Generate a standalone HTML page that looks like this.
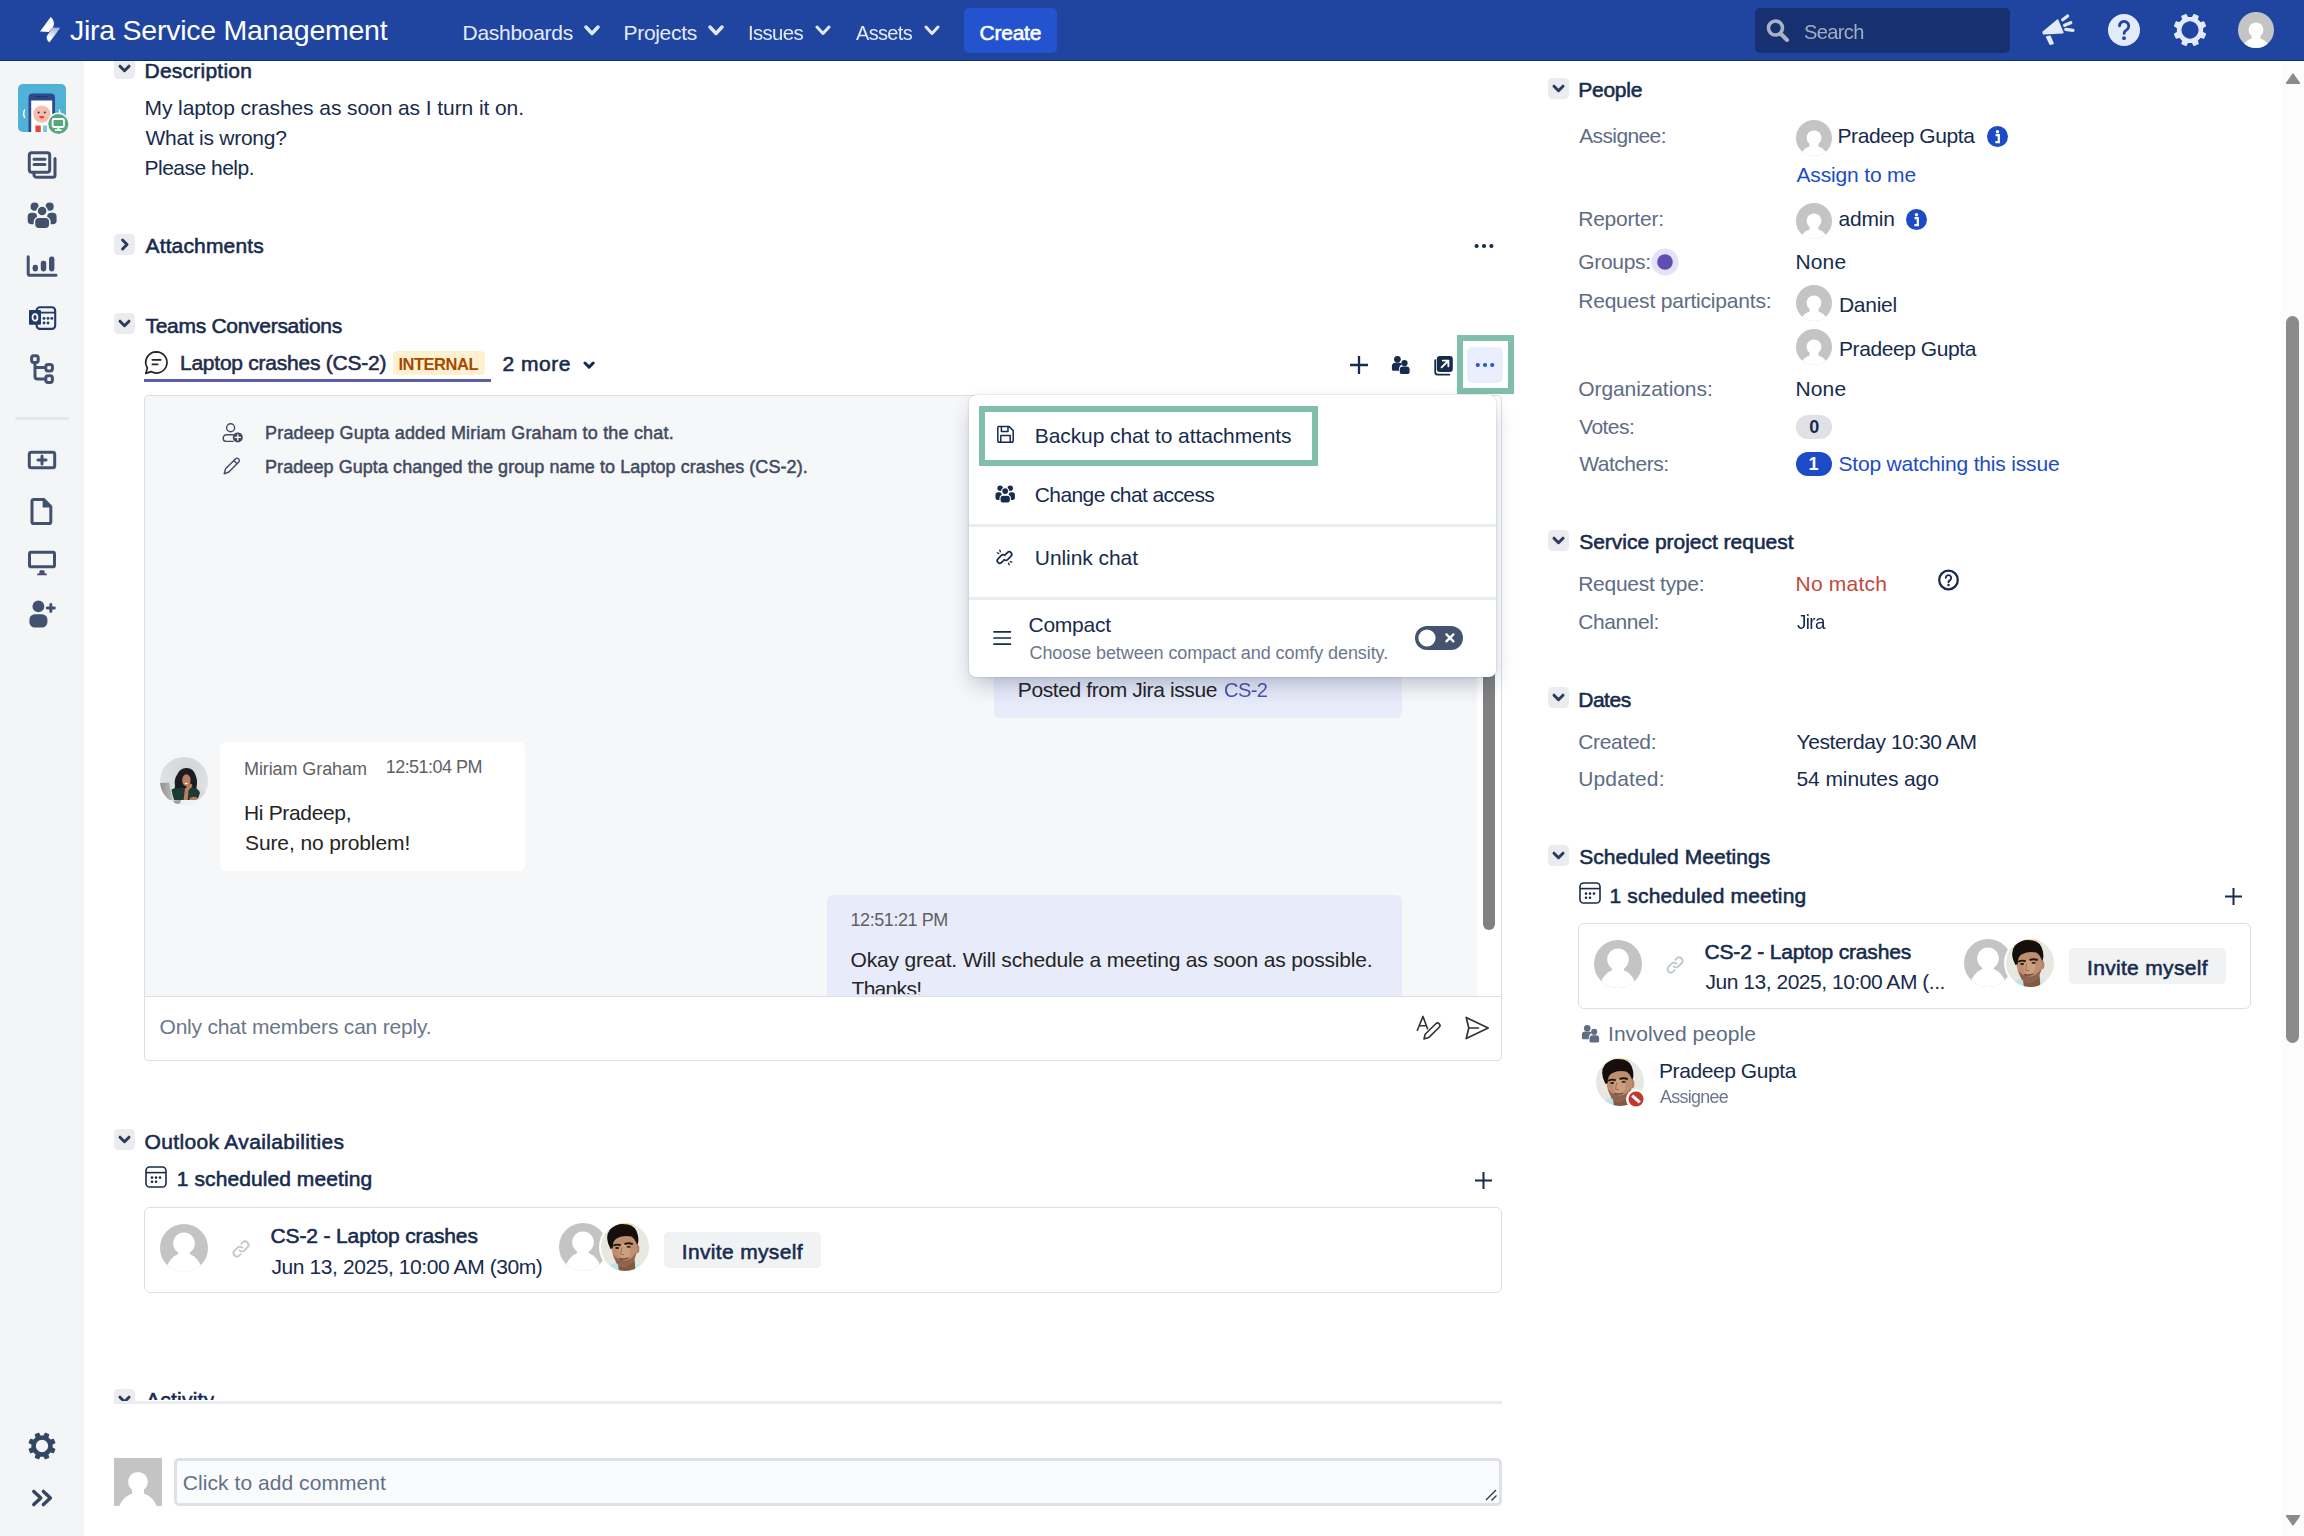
<!DOCTYPE html>
<html lang="en"><head><meta charset="utf-8"><title>[CS-2] Laptop crashes - Jira Service Management</title>
<style>
html,body{margin:0;padding:0;}
body{width:2304px;height:1536px;overflow:hidden;position:relative;background:#fff;font-family:"Liberation Sans",sans-serif;}
#pg{position:absolute;left:0;top:0;width:2304px;height:1536px;overflow:hidden;}
#pg div,#pg svg,#pg span{position:absolute;box-sizing:border-box;}
#pg span{white-space:pre;line-height:1;}
</style></head><body><div id="pg">
<div style="left:0px;top:0px;width:2304px;height:61px;background:#2045a1;border-bottom:1px solid #1a2c5c;"></div>
<svg style="left:38px;top:15px;" width="26" height="30" viewBox="0 0 26 30"><defs><linearGradient id="lg" x1="0.6" y1="0" x2="0.35" y2="1"><stop offset="0" stop-color="#9fb0da"/><stop offset="0.75" stop-color="#fff"/></linearGradient></defs><path d="M14.6 12.400 L22.300 12.800 L11.400 27.600 C8.600 25 8 22.300 9.200 20.400 Z" fill="url(#lg)"/><path d="M12.700 2 C15.600 4.200 16.900 8.400 15 12 L10.800 17 L2 16.600 Z" fill="#fff"/></svg>
<span style="left:70.00px;top:15.87px;font-size:28.5px;color:#fff;letter-spacing:-0.251px;">Jira Service Management</span>
<span style="left:462.50px;top:21.72px;font-size:21px;color:#e3ebfb;letter-spacing:-0.282px;">Dashboards</span>
<svg style="left:584px;top:24.5px;" width="16" height="11" viewBox="0 0 16 11"><path d="M2 2 L8.0 8.5 L14 2" fill="none" stroke="#e3ebfb" stroke-width="3.4" stroke-linecap="round" stroke-linejoin="round"/></svg>
<span style="left:623.50px;top:21.72px;font-size:21px;color:#e3ebfb;letter-spacing:-0.308px;">Projects</span>
<svg style="left:708px;top:24.5px;" width="16" height="11" viewBox="0 0 16 11"><path d="M2 2 L8.0 8.5 L14 2" fill="none" stroke="#e3ebfb" stroke-width="3.4" stroke-linecap="round" stroke-linejoin="round"/></svg>
<span style="left:747.50px;top:21.72px;font-size:21px;color:#e3ebfb;letter-spacing:-0.700px;transform:scaleX(0.9732);transform-origin:1.0px 50%;">Issues</span>
<svg style="left:814.5px;top:25px;" width="16" height="11" viewBox="0 0 16 11"><path d="M2 2 L8.0 8.5 L14 2" fill="none" stroke="#e3ebfb" stroke-width="3" stroke-linecap="round" stroke-linejoin="round"/></svg>
<span style="left:855.50px;top:21.72px;font-size:21px;color:#e3ebfb;letter-spacing:-0.700px;transform:scaleX(0.9522);transform-origin:-0.0px 50%;">Assets</span>
<svg style="left:923.5px;top:25px;" width="16" height="11" viewBox="0 0 16 11"><path d="M2 2 L8.0 8.5 L14 2" fill="none" stroke="#e3ebfb" stroke-width="3" stroke-linecap="round" stroke-linejoin="round"/></svg>
<div style="left:964px;top:8px;width:93px;height:45px;background:#2453d0;border-radius:5px;"></div>
<span style="left:979.50px;top:21.72px;font-size:21px;color:#fff;-webkit-text-stroke:0.57px #fff;letter-spacing:-0.230px;">Create</span>
<div style="left:1755px;top:8px;width:255px;height:45px;background:#17306f;border-radius:5px;"></div>
<svg style="left:1765px;top:18px;" width="26" height="26" viewBox="0 0 26 26"><circle cx="10.5" cy="10" r="7" fill="none" stroke="#a9b2c4" stroke-width="3.6"/><path d="M15.5 15.5 L22 22" stroke="#a9b2c4" stroke-width="4" stroke-linecap="round"/></svg>
<span style="left:1804.00px;top:21.22px;font-size:21px;color:#a3adc2;letter-spacing:-0.700px;transform:scaleX(0.9574);transform-origin:-0.0px 50%;">Search</span>
<svg style="left:2040px;top:13px;" width="36" height="34" viewBox="0 0 36 34"><g fill="#e3ebfb" stroke="#e3ebfb" stroke-width="1.600" stroke-linejoin="round"><path d="M3.200 19 L17.600 7 L22.800 19.600 L3.600 20.800 Z" /><path d="M6.600 24 L10 23.200 L13 30.400 L10.200 31.200 Z"/></g><g stroke="#e3ebfb" stroke-width="3.200" stroke-linecap="round"><path d="M22.700 6.700 L27.600 3"/><path d="M24.600 12.300 L30.800 9.700"/><path d="M25.800 16.400 L33 17.400"/></g></svg>
<svg style="left:2106px;top:12px;" width="36" height="36" viewBox="0 0 36 36"><circle cx="18" cy="18" r="16" fill="#e3ebfb"/><path d="M13.5 14 a4.6 4.6 0 1 1 7 3.9 c-1.6 1-2.4 1.8-2.4 3.6" fill="none" stroke="#2045a1" stroke-width="2.700" stroke-linecap="round"/><circle cx="18" cy="26.200" r="1.900" fill="#2045a1"/></svg>
<svg style="left:2172px;top:11.7px;" width="36" height="36" viewBox="0 0 36 36"><path d="M30.43 15.40 L33.84 15.76 L33.84 20.24 L30.43 20.60 L28.63 24.95 L30.78 27.62 L27.62 30.78 L24.95 28.63 L20.60 30.43 L20.24 33.84 L15.76 33.84 L15.40 30.43 L11.05 28.63 L8.38 30.78 L5.22 27.62 L7.37 24.95 L5.57 20.60 L2.16 20.24 L2.16 15.76 L5.57 15.40 L7.37 11.05 L5.22 8.38 L8.38 5.22 L11.05 7.37 L15.40 5.57 L15.76 2.16 L20.24 2.16 L20.60 5.57 L24.95 7.37 L27.62 5.22 L30.78 8.38 L28.63 11.05 Z M27.2 18 A9.2 9.2 0 1 0 8.8 18 A9.2 9.2 0 1 0 27.2 18 Z" fill="#e3ebfb" fill-rule="evenodd" stroke="#e3ebfb" stroke-width="1.2" stroke-linejoin="round" transform="rotate(22.5 18 18)"/></svg>
<svg style="left:2238px;top:12px;" width="36" height="36" viewBox="0 0 36 36"><clipPath id="ac19"><circle cx="18" cy="18" r="18"/></clipPath><circle cx="18" cy="18" r="18" fill="#c4c4c4"/><g clip-path="url(#ac19)" fill="#fff"><circle cx="18" cy="17.82" r="7.38"/><path d="M13.50 17.82 V27.60 L9.90 29.60 H26.10 L22.50 27.60 V17.82Z"/><ellipse cx="18" cy="40.50" rx="14.76" ry="14.40"/></g></svg>
<div style="left:0px;top:61px;width:84px;height:1475px;background:#f4f5f7;"></div>
<svg style="left:18px;top:84px;" width="52" height="52" viewBox="0 0 52 52"><clipPath id="pa"><rect width="48" height="48" rx="5"/></clipPath><rect width="48" height="48" rx="5" fill="#4fb2d6"/><g clip-path="url(#pa)"><rect x="10.5" y="9.5" width="26.5" height="42" rx="4" fill="#2c4a8c"/><rect x="13.2" y="16.5" width="21" height="34" fill="#fff"/><rect x="17.5" y="12" width="12" height="1.6" rx="0.8" fill="#1f3a73"/><circle cx="23.8" cy="30.2" r="8.6" fill="#f6bdb2"/><circle cx="20.6" cy="28.6" r="1" fill="#333"/><circle cx="26.8" cy="28.6" r="1" fill="#333"/><path d="M21.3 32 h5 a2.5 2.5 0 0 1 -5 0z" fill="#e5493a"/><rect x="17.4" y="41.5" width="5.4" height="6.5" fill="#e5493a"/><rect x="25" y="41.5" width="4" height="6.5" fill="#7cc7d8"/><path d="M6.8 25.5 q-2.2 4.2 0 8.4" stroke="#fff" stroke-width="1.4" fill="none"/><path d="M41 25.5 q2.2 4.2 0 8.4" stroke="#fff" stroke-width="1.4" fill="none"/></g><circle cx="40.3" cy="40" r="11.4" fill="#f4f5f7"/><circle cx="40.3" cy="40" r="10" fill="#56a77a"/><rect x="34.6" y="35" width="11.4" height="8" rx="1.4" fill="none" stroke="#fff" stroke-width="1.8"/><path d="M40.3 43 v3 M37 46.2 h6.6" stroke="#fff" stroke-width="1.8"/></svg>
<svg style="left:26px;top:149px;" width="32" height="32" viewBox="0 0 32 32"><path d="M8 9.5 V26 a2.2 2.2 0 0 0 2.2 2.2 H27 a2 2 0 0 0 2-2 V9.5" fill="none" stroke="#42526e" stroke-width="3" stroke-linejoin="round" stroke-linecap="round"/><rect x="3.3" y="3.8" width="20.4" height="19.4" rx="2.4" fill="#f4f5f7" stroke="#42526e" stroke-width="3"/><path d="M8 10.2 h11 M8 15.6 h11" stroke="#42526e" stroke-width="3" stroke-linecap="round"/></svg>
<svg style="left:26.7px;top:202px;" width="30.3" height="27.27" viewBox="0 0 30 27.600"><g fill="#42526e"><circle cx="7.400" cy="4.700" r="4.100"/><circle cx="22.600" cy="4.700" r="4.100"/><rect x="0.400" y="10.800" width="9.400" height="11.800" rx="3.800"/><rect x="20.200" y="10.800" width="9.400" height="11.800" rx="3.800"/><g stroke="#f4f5f7" stroke-width="1.600"><rect x="7.200" y="15.400" width="15.600" height="11.800" rx="4.600"/><circle cx="15" cy="9.200" r="5.100"/></g></g></svg>
<svg style="left:25px;top:254px;" width="34" height="26" viewBox="0 0 34 26"><path d="M3.2 2.8 V19.8 a1.5 1.5 0 0 0 1.5 1.5 H31" fill="none" stroke="#42526e" stroke-width="3" stroke-linecap="round"/><rect x="7.6" y="10.8" width="5.4" height="6.6" rx="2.4" fill="#42526e"/><rect x="15.8" y="6.8" width="5.4" height="10.6" rx="2.4" fill="#42526e"/><rect x="24" y="2.6" width="5.4" height="14.8" rx="2.4" fill="#42526e"/></svg>
<svg style="left:26px;top:304px;" width="32" height="28" viewBox="0 0 32 28"><rect x="10.600" y="3.300" width="18.600" height="21.600" rx="3.400" fill="#f4f5f7" stroke="#213a69" stroke-width="2.100"/><path d="M10.600 8.600 h18.600" stroke="#213a69" stroke-width="1.800"/><g fill="#213a69"><circle cx="18" cy="14.400" r="1.450"/><circle cx="22" cy="14.400" r="1.450"/><circle cx="25.800" cy="14.400" r="1.450"/><circle cx="18" cy="19" r="1.450"/><circle cx="22" cy="19" r="1.450"/></g><rect x="3" y="6" width="12" height="14.800" rx="0.800" fill="#213a69"/><ellipse cx="9" cy="13.400" rx="2.500" ry="3.300" fill="none" stroke="#fff" stroke-width="1.700"/></svg>
<svg style="left:29px;top:353px;" width="26" height="32" viewBox="0 0 26 32"><g fill="none" stroke="#42526e" stroke-width="3"><rect x="2.600" y="2.800" width="6.600" height="6.600" rx="2.200"/><rect x="16.800" y="11.400" width="6.600" height="6.600" rx="2.200"/><rect x="16.800" y="22.800" width="6.600" height="6.600" rx="2.200"/><path d="M6 9.600 V23.600 a2.400 2.400 0 0 0 2.400 2.400 H16.600 M6 14.600 H16.600"/></g></svg>
<div style="left:15px;top:416.5px;width:54px;height:3px;background:#e4e6ea;border-radius:1.5px;"></div>
<svg style="left:26px;top:449px;" width="32" height="22" viewBox="0 0 32 22"><rect x="3.300" y="3.300" width="25.400" height="15.400" rx="2" fill="none" stroke="#42526e" stroke-width="3"/><path d="M16 7 v8 M12 11 h8" stroke="#42526e" stroke-width="3" stroke-linecap="round"/></svg>
<svg style="left:29px;top:495.5px;" width="26" height="31" viewBox="0 0 26 31"><path d="M4.600 3.400 H14.600 L21.800 10.600 V26 a1.600 1.600 0 0 1 -1.600 1.600 H4.600 a1.600 1.600 0 0 1 -1.600 -1.600 V5 a1.600 1.600 0 0 1 1.600 -1.600z" fill="none" stroke="#42526e" stroke-width="3" stroke-linejoin="round"/><path d="M13.600 3.400 L21.800 11.600 H13.600Z" fill="#42526e"/></svg>
<svg style="left:26px;top:549px;" width="32" height="29" viewBox="0 0 32 29"><rect x="3.500" y="3.200" width="25" height="14.600" rx="1.600" fill="none" stroke="#42526e" stroke-width="3"/><path d="M13.800 21.200 h4.400 l0.700 3.200 h-5.800z M11.200 24.400 h9.600 v1.800 h-9.600z" fill="#42526e"/></svg>
<svg style="left:27px;top:598px;" width="30" height="31" viewBox="0 0 30 31"><g fill="#42526e"><circle cx="11.400" cy="8.400" r="5.900"/><rect x="2.400" y="16.200" width="18" height="13.400" rx="5.400"/></g><path d="M23.800 6.400 v7.200 M20.200 10 h7.200" stroke="#42526e" stroke-width="2.900" stroke-linecap="round"/></svg>
<svg style="left:24px;top:1428px;" width="36" height="36" viewBox="0 0 36 36"><path d="M27.98 15.91 L31.07 16.16 L31.07 19.84 L27.98 20.09 L26.54 23.58 L28.55 25.94 L25.94 28.55 L23.58 26.54 L20.09 27.98 L19.84 31.07 L16.16 31.07 L15.91 27.98 L12.42 26.54 L10.06 28.55 L7.45 25.94 L9.46 23.58 L8.02 20.09 L4.93 19.84 L4.93 16.16 L8.02 15.91 L9.46 12.42 L7.45 10.06 L10.06 7.45 L12.42 9.46 L15.91 8.02 L16.16 4.93 L19.84 4.93 L20.09 8.02 L23.58 9.46 L25.94 7.45 L28.55 10.06 L26.54 12.42 Z M24.8 18 A6.8 6.8 0 1 0 11.2 18 A6.8 6.8 0 1 0 24.8 18 Z" fill="#344563" fill-rule="evenodd" stroke="#344563" stroke-width="1.2" stroke-linejoin="round" transform="rotate(22.5 18 18)"/></svg>
<svg style="left:30px;top:1487px;" width="24" height="22" viewBox="0 0 24 22"><path d="M3.800 4.400 L10.800 11 L3.800 17.600 M13.400 4.400 L20.400 11 L13.400 17.600" fill="none" stroke="#344563" stroke-width="3.400" stroke-linecap="round" stroke-linejoin="round"/></svg>
<svg style="left:114px;top:61px;" width="21" height="18" viewBox="0 0 21 18"><rect y="-3" width="21" height="21" rx="4.500" fill="#ebecf0"/><path d="M6 5.200 L10.500 9.700 L15 5.200" fill="none" stroke="#2c3b5a" stroke-width="3" stroke-linecap="round" stroke-linejoin="round"/></svg>
<span style="left:144.50px;top:60.22px;font-size:21px;color:#172b4d;-webkit-text-stroke:0.57px #172b4d;letter-spacing:0.234px;clip-path:inset(3px 0 0 0);">Description</span>
<span style="left:144.50px;top:97.22px;font-size:21px;color:#172b4d;letter-spacing:-0.081px;">My laptop crashes as soon as I turn it on.</span>
<span style="left:145.50px;top:127.22px;font-size:21px;color:#172b4d;letter-spacing:-0.257px;">What is wrong?</span>
<span style="left:144.50px;top:157.22px;font-size:21px;color:#172b4d;letter-spacing:-0.504px;">Please help.</span>
<svg style="left:114px;top:234px;" width="21" height="21" viewBox="0 0 21 21"><rect width="21" height="21" rx="4.500" fill="#ebecf0"/><path d="M8.600 6 L13 10.500 L8.600 15" fill="none" stroke="#2c3b5a" stroke-width="3" stroke-linecap="round" stroke-linejoin="round"/></svg>
<span style="left:145.50px;top:235.22px;font-size:21px;color:#172b4d;-webkit-text-stroke:0.57px #172b4d;letter-spacing:0.148px;">Attachments</span>
<svg style="left:1471.5px;top:241.5px;" width="24" height="8" viewBox="0 0 24 8"><circle cx="4.6" cy="4" r="2.1" fill="#172b4d"/><circle cx="12.0" cy="4" r="2.1" fill="#172b4d"/><circle cx="19.4" cy="4" r="2.1" fill="#172b4d"/></svg>
<svg style="left:114px;top:313px;" width="21" height="21" viewBox="0 0 21 21"><rect width="21" height="21" rx="4.500" fill="#ebecf0"/><path d="M6 8.200 L10.500 12.700 L15 8.200" fill="none" stroke="#2c3b5a" stroke-width="3" stroke-linecap="round" stroke-linejoin="round"/></svg>
<span style="left:145.50px;top:315.22px;font-size:21px;color:#172b4d;-webkit-text-stroke:0.57px #172b4d;letter-spacing:-0.290px;">Teams Conversations</span>
<svg style="left:143px;top:349px;" width="27" height="28" viewBox="0 0 27 28"><path d="M13.400 2.800 a10.600 10.600 0 1 1 -5.300 19.800 L2.800 24.400 L4.400 19 A10.600 10.600 0 0 1 13.400 2.800z" fill="none" stroke="#242424" stroke-width="1.700" stroke-linejoin="round"/><path d="M9.400 10.800 h8.400 M9.400 15.400 h5.200" stroke="#242424" stroke-width="1.700" stroke-linecap="round"/></svg>
<span style="left:180.00px;top:351.92px;font-size:21px;color:#1f2d4d;-webkit-text-stroke:0.57px #1f2d4d;letter-spacing:-0.243px;">Laptop crashes (CS-2)</span>
<div style="left:393px;top:351px;width:92px;height:24px;background:#fdf1d0;border-radius:4.5px;"></div>
<span style="left:398.50px;top:356.03px;font-size:16.5px;color:#a54800;font-weight:700;letter-spacing:-0.490px;">INTERNAL</span>
<div style="left:144px;top:379.3px;width:347px;height:3px;background:#5b5fa9;"></div>
<span style="left:502.50px;top:353.22px;font-size:21px;color:#172b4d;-webkit-text-stroke:0.57px #172b4d;letter-spacing:0.504px;">2 more</span>
<svg style="left:583.3px;top:361px;" width="12.2" height="8.6" viewBox="0 0 12.2 8.6"><path d="M2 2 L6.1 6.1 L10.2 2" fill="none" stroke="#172b4d" stroke-width="3" stroke-linecap="round" stroke-linejoin="round"/></svg>
<svg style="left:1349.0px;top:355.0px;" width="20" height="20" viewBox="0 0 20 20"><path d="M10.0 1 v18 M1 10.0 h18" stroke="#172b4d" stroke-width="2.3"/></svg>
<svg style="left:1391.3px;top:355.2px;" width="19.5" height="19.5" viewBox="0 0 19.200 19.800"><g fill="#172b4d"><circle cx="6.200" cy="4.400" r="3.400"/><path d="M0.600 14.400 v-3 a3.600 3.600 0 0 1 3.600 -3.600 h4 a3.600 3.600 0 0 1 3 1.600 a5.600 5.600 0 0 0 -3.400 5 v1.600 h-5.600 a1.600 1.600 0 0 1 -1.600 -1.600z"/><circle cx="13.400" cy="8.200" r="3.200"/><path d="M8.600 17.600 v-2.800 a3.200 3.200 0 0 1 3.200 -3.200 h3.600 a3.200 3.200 0 0 1 3.200 3.200 v2.800 a1.800 1.800 0 0 1 -1.800 1.800 h-6.400 a1.800 1.800 0 0 1 -1.800 -1.800z"/></g></svg>
<svg style="left:1431px;top:353.5px;" width="24" height="24" viewBox="0 0 24 24"><path d="M4.200 6.200 V18 a2.600 2.600 0 0 0 2.600 2.600 H18.400" fill="none" stroke="#172b4d" stroke-width="1.800" stroke-linecap="round"/><rect x="5.800" y="2" width="16" height="16" rx="3" fill="#172b4d"/><path d="M10.600 13.400 L17 7 M11.800 6.600 H17.400 V12.200" fill="none" stroke="#fff" stroke-width="1.900" stroke-linecap="round" stroke-linejoin="round"/></svg>
<div style="left:1457.2px;top:335.4px;width:56.4px;height:58.4px;border:6px solid #80bfa9;"></div>
<div style="left:1467px;top:347px;width:36px;height:36px;background:#e9effd;border-radius:5px;"></div>
<svg style="left:1472.7px;top:360.5px;" width="24" height="8" viewBox="0 0 24 8"><circle cx="4.8" cy="4" r="2.1" fill="#2456d6"/><circle cx="12.0" cy="4" r="2.1" fill="#2456d6"/><circle cx="19.2" cy="4" r="2.1" fill="#2456d6"/></svg>
<div style="left:144px;top:394.5px;width:1358px;height:666.5px;background:#fff;border-radius:4px;border:1px solid #dcdfe6;"></div>
<div style="left:145px;top:395.5px;width:1332px;height:600.5px;background:#f6f7f9;border-radius:4px 0 0 0;"></div>
<div style="left:145px;top:996px;width:1356px;height:1px;background:#dcdfe6;"></div>
<svg style="left:221px;top:421.5px;" width="24" height="22" viewBox="0 0 24 22"><circle cx="9.600" cy="5.800" r="4" fill="none" stroke="#424a60" stroke-width="1.400"/><path d="M12 19.400 H5 a2.800 2.800 0 0 1 -2.800 -2.800 v-0.600 a3.200 3.200 0 0 1 3.200 -3.200 h6.800" fill="none" stroke="#424a60" stroke-width="1.400" stroke-linecap="round"/><circle cx="16.800" cy="15.400" r="5" fill="#424a60"/><path d="M16.800 12.800 v5.200 M14.200 15.400 h5.200" stroke="#fff" stroke-width="1.300" stroke-linecap="round"/></svg>
<span style="left:265.00px;top:423.76px;font-size:18px;color:#424a60;-webkit-text-stroke:0.49px #424a60;letter-spacing:0.188px;">Pradeep Gupta added Miriam Graham to the chat.</span>
<svg style="left:221px;top:456px;" width="22" height="21" viewBox="0 0 22 21"><path d="M3.200 17.800 L4.600 12.800 L14.600 2.800 a2 2 0 0 1 2.800 0 l0.400 0.400 a2 2 0 0 1 0 2.800 L7.800 16 Z M12.800 4.600 L16 7.800" fill="none" stroke="#424a60" stroke-width="1.400" stroke-linejoin="round" stroke-linecap="round"/></svg>
<span style="left:265.00px;top:457.76px;font-size:18px;color:#424a60;-webkit-text-stroke:0.49px #424a60;letter-spacing:0.072px;">Pradeep Gupta changed the group name to Laptop crashes (CS-2).</span>
<div style="left:994px;top:560px;width:408px;height:157.5px;background:#e8ebfa;border-radius:6px;"></div>
<span style="left:1017.80px;top:678.62px;font-size:21px;color:#242424;letter-spacing:-0.389px;">Posted from Jira issue </span>
<span style="left:1223.50px;top:678.62px;font-size:21px;color:#4f52b2;letter-spacing:-0.700px;transform:scaleX(0.9577);transform-origin:1.0px 50%;">CS-2</span>
<svg style="left:160px;top:757px;" width="48" height="48" viewBox="0 0 48 48"><defs><clipPath id="pm"><circle cx="24" cy="24" r="24"/></clipPath><filter id="pmb" x="-10%" y="-10%" width="120%" height="120%"><feGaussianBlur stdDeviation="0.55"/></filter><radialGradient id="pmg" cx="0.55" cy="0.25" r="0.8"><stop offset="0" stop-color="#d2d4d7"/><stop offset="1" stop-color="#e6e7e9"/></radialGradient><linearGradient id="pml" x1="0" y1="0" x2="1" y2="0"><stop offset="0" stop-color="#8c8c8c"/><stop offset="1" stop-color="#bcbcbc"/></linearGradient></defs><g clip-path="url(#pm)"><rect width="48" height="48" fill="url(#pmg)"/><g filter="url(#pmb)"><path d="M37 31.500 Q43 30 46.500 36 L46.500 44 L37 44Z" fill="#dadada"/><path d="M-1 26 L9.200 25.400 L12.600 43.500 L-1 47Z" fill="url(#pml)"/><path d="M26 11 Q33 10.500 35.500 18 Q38 24 36.500 30 Q37.500 36 33 39.500 L18 40.500 Q13 36 15 29 Q13.800 22 17.500 17 Q20 11.500 26 11Z" fill="#1a1e20"/><path d="M11.500 32.500 Q14 30.500 18 31 L34 30.500 Q39 32 40 36 L38 41.500 L30 43 L14 43 L12.500 38Z" fill="#1f3a35"/><ellipse cx="26.400" cy="23.200" rx="4.200" ry="6" fill="#b9805f"/><ellipse cx="26.200" cy="26.500" rx="1.600" ry="0.700" fill="#fff"/><path d="M30.500 26.500 Q33 27 32 30 L28.600 33 L27.600 43.500 L23.500 43.500 L25 32 Q27.500 28 30.500 26.500Z" fill="#b9805f"/><rect x="24.400" y="34.800" width="3.600" height="1" fill="#a8792e"/><path d="M30 41 Q34 38.500 37.500 41 L36 43.600 L29 43.600Z" fill="#b07857"/><rect x="-1" y="43" width="50" height="6" fill="#f2f2f2"/><path d="M13 43.600 L21 43 L20 46.500 L15 47Z" fill="#9a9da3"/></g></g></svg>
<div style="left:220px;top:742px;width:305px;height:128.7px;background:#fff;border-radius:6px;"></div>
<span style="left:244.00px;top:760.26px;font-size:18px;color:#616161;letter-spacing:-0.093px;">Miriam Graham</span>
<span style="left:385.70px;top:757.76px;font-size:18px;color:#616161;letter-spacing:-0.537px;">12:51:04 PM</span>
<span style="left:244.00px;top:802.22px;font-size:21px;color:#242424;letter-spacing:-0.336px;">Hi Pradeep,</span>
<span style="left:245.00px;top:832.22px;font-size:21px;color:#242424;letter-spacing:-0.106px;">Sure, no problem!</span>
<div style="left:826.6px;top:895px;width:575.4px;height:101px;background:#e8ebfa;border-radius:6px 6px 0 0;"></div>
<span style="left:850.50px;top:911.06px;font-size:18px;color:#616161;letter-spacing:-0.427px;">12:51:21 PM</span>
<span style="left:850.50px;top:948.72px;font-size:21px;color:#242424;letter-spacing:-0.186px;">Okay great. Will schedule a meeting as soon as possible.</span>
<span style="left:851.50px;top:977.72px;font-size:21px;color:#242424;letter-spacing:-0.694px;clip-path:inset(0 0 4.400px 0);">Thanks!</span>
<div style="left:1483px;top:560px;width:12px;height:370px;background:#808080;border-radius:6px;"></div>
<span style="left:159.50px;top:1016.22px;font-size:21px;color:#6b778c;letter-spacing:-0.198px;">Only chat members can reply.</span>
<svg style="left:1415px;top:1014px;" width="28" height="28" viewBox="0 0 28 28"><path d="M2.400 16.300 L8 2.400 L12.500 14.700 M4.600 11.800 H11.100" fill="none" stroke="#333" stroke-width="1.600" stroke-linejoin="round" stroke-linecap="round"/><path d="M9 25 L10.200 20.300 L20.800 9.800 a2.400 2.400 0 0 1 3.400 3.400 L13.600 23.600 Z" fill="none" stroke="#333" stroke-width="1.600" stroke-linejoin="round"/></svg>
<svg style="left:1462px;top:1014px;" width="30" height="28" viewBox="0 0 30 28"><path d="M4.200 3.400 L26.200 14 L4.200 24.600 L6.800 14 Z M6.800 14 H16.400" fill="none" stroke="#333" stroke-width="1.700" stroke-linejoin="round" stroke-linecap="round"/></svg>
<div style="left:969px;top:394.5px;width:527px;height:282px;background:#fff;border-radius:7px;box-shadow:0 0 2px rgba(9,30,66,.25),0 10px 22px -4px rgba(9,30,66,.28);"></div>
<div style="left:979px;top:406px;width:338.5px;height:60px;border:6px solid #80bfa9;"></div>
<svg style="left:994.5px;top:424px;" width="21" height="21" viewBox="0 0 21 21"><path d="M3.400 2.600 H14.200 L18.200 6.600 V16.400 a1.800 1.800 0 0 1 -1.800 1.800 H4.600 a1.800 1.800 0 0 1 -1.800 -1.800 V3.200 z" fill="none" stroke="#172b4d" stroke-width="1.500" stroke-linejoin="round"/><path d="M6.400 2.800 V7.400 H13 V2.800 M5.800 18 V11.600 H15.200 V18" fill="none" stroke="#172b4d" stroke-width="1.500" stroke-linejoin="round"/></svg>
<span style="left:1034.80px;top:424.82px;font-size:21px;color:#172b4d;letter-spacing:-0.098px;">Backup chat to attachments</span>
<svg style="left:994.8px;top:485px;" width="20.4" height="18.36" viewBox="0 0 30 27.600"><g fill="#172b4d"><circle cx="7.400" cy="4.700" r="4.100"/><circle cx="22.600" cy="4.700" r="4.100"/><rect x="0.400" y="10.800" width="9.400" height="11.800" rx="3.800"/><rect x="20.200" y="10.800" width="9.400" height="11.800" rx="3.800"/><g stroke="#fff" stroke-width="1.600"><rect x="7.200" y="15.400" width="15.600" height="11.800" rx="4.600"/><circle cx="15" cy="9.200" r="5.100"/></g></g></svg>
<span style="left:1034.80px;top:484.22px;font-size:21px;color:#172b4d;letter-spacing:-0.605px;">Change chat access</span>
<div style="left:969px;top:524px;width:527px;height:3px;background:#ebecf0;"></div>
<svg style="left:994px;top:547px;" width="21" height="21" viewBox="0 0 21 21"><g fill="none" stroke="#172b4d" stroke-width="1.700" stroke-linecap="round"><path d="M9.200 13.800 L7.600 15.400 a2.500 2.500 0 0 1 -3.600 -3.600 L7.400 8.400 a2.500 2.500 0 0 1 3.600 0"/><path d="M11.800 7.200 L13.400 5.600 a2.500 2.500 0 0 1 3.600 3.600 L13.600 12.600 a2.500 2.500 0 0 1 -3.600 0"/><path d="M3.200 5.800 L4.800 6.400 M5.800 3.200 L6.400 4.800 M17.800 15.200 L16.200 14.600 M15.200 17.800 L14.600 16.200" stroke-width="1.300"/></g></svg>
<span style="left:1034.80px;top:547.22px;font-size:21px;color:#172b4d;letter-spacing:-0.065px;">Unlink chat</span>
<div style="left:969px;top:596.5px;width:527px;height:3px;background:#ebecf0;"></div>
<svg style="left:991px;top:629px;" width="22" height="18" viewBox="0 0 22 18"><path d="M3 2.800 H19.400 M3 9 H19.400 M3 15.200 H19.400" stroke="#172b4d" stroke-width="1.700" stroke-linecap="round"/></svg>
<span style="left:1028.50px;top:613.62px;font-size:21px;color:#172b4d;letter-spacing:-0.249px;">Compact</span>
<span style="left:1029.50px;top:644.36px;font-size:18px;color:#6b778c;letter-spacing:-0.079px;">Choose between compact and comfy density.</span>
<div style="left:1415px;top:625.7px;width:48px;height:24px;background:#44546f;border-radius:12px;"></div>
<svg style="left:1417px;top:627.7px;" width="44" height="20" viewBox="0 0 44 20"><circle cx="10" cy="10" r="8.600" fill="#fff"/><path d="M29.400 6.400 L36.400 13.400 M36.400 6.400 L29.400 13.400" stroke="#fff" stroke-width="2.300" stroke-linecap="round"/></svg>
<svg style="left:114px;top:1129px;" width="21" height="21" viewBox="0 0 21 21"><rect width="21" height="21" rx="4.500" fill="#ebecf0"/><path d="M6 8.200 L10.500 12.700 L15 8.200" fill="none" stroke="#2c3b5a" stroke-width="3" stroke-linecap="round" stroke-linejoin="round"/></svg>
<span style="left:144.50px;top:1131.22px;font-size:21px;color:#172b4d;-webkit-text-stroke:0.57px #172b4d;letter-spacing:0.349px;">Outlook Availabilities</span>
<svg style="left:144.8px;top:1165.8px;" width="22" height="22" viewBox="0 0 22 22"><rect x="1" y="1" width="20" height="20" rx="3.600" fill="none" stroke="#172b4d" stroke-width="1.600"/><path d="M1 6.600 H21" stroke="#172b4d" stroke-width="1.600"/><g fill="#172b4d"><circle cx="7" cy="11.600" r="1.300"/><circle cx="11" cy="11.600" r="1.300"/><circle cx="15" cy="11.600" r="1.300"/><circle cx="7" cy="15.800" r="1.300"/><circle cx="11" cy="15.800" r="1.300"/></g></svg>
<span style="left:176.80px;top:1167.92px;font-size:21px;color:#172b4d;-webkit-text-stroke:0.57px #172b4d;letter-spacing:0.082px;">1 scheduled meeting</span>
<svg style="left:1474.0px;top:1170.5px;" width="19" height="19" viewBox="0 0 19 19"><path d="M9.5 1 v17 M1 9.5 h17" stroke="#172b4d" stroke-width="2"/></svg>
<div style="left:144px;top:1207px;width:1358px;height:86px;background:#fff;border-radius:6px;border:1px solid #dcdfe6;"></div>
<svg style="left:160px;top:1223.5px;" width="48" height="48" viewBox="0 0 48 48"><clipPath id="ac102"><circle cx="24" cy="24" r="24"/></clipPath><circle cx="24" cy="24" r="24" fill="#c4c4c4"/><g clip-path="url(#ac102)" fill="#fff"><circle cx="24" cy="19.30" r="10.85"/><path d="M18.00 19.30 V30.80 L13.20 32.80 H34.80 L30.00 30.80 V19.30Z"/><ellipse cx="24" cy="48.41" rx="18.00" ry="19.10"/></g></svg>
<svg style="left:231px;top:1239px;" width="20" height="20" viewBox="0 0 20 20"><g fill="none" stroke="#c1c7d0" stroke-width="1.900" stroke-linecap="round"><path d="M8.600 11.400 a3.400 3.400 0 0 0 4.800 0 l3.200 -3.200 a3.400 3.400 0 0 0 -4.800 -4.800 l-1.400 1.400"/><path d="M11.400 8.600 a3.400 3.400 0 0 0 -4.800 0 l-3.200 3.200 a3.400 3.400 0 0 0 4.800 4.800 l1.400 -1.400"/></g></svg>
<span style="left:270.50px;top:1224.92px;font-size:21px;color:#172b4d;-webkit-text-stroke:0.57px #172b4d;letter-spacing:-0.135px;">CS-2 - Laptop crashes</span>
<span style="left:271.50px;top:1255.52px;font-size:21px;color:#172b4d;letter-spacing:-0.414px;">Jun 13, 2025, 10:00 AM (30m)</span>
<svg style="left:558.8px;top:1223px;" width="48" height="48" viewBox="0 0 48 48"><clipPath id="ac106"><circle cx="24" cy="24" r="24"/></clipPath><circle cx="24" cy="24" r="24" fill="#c4c4c4"/><g clip-path="url(#ac106)" fill="#fff"><circle cx="24" cy="19.30" r="10.85"/><path d="M18.00 19.30 V30.80 L13.20 32.80 H34.80 L30.00 30.80 V19.30Z"/><ellipse cx="24" cy="48.41" rx="18.00" ry="19.10"/></g></svg>
<svg style="left:599px;top:1221px;" width="52" height="52" viewBox="0 0 52 52"><defs><clipPath id="pp107"><circle cx="24" cy="24" r="24"/></clipPath><filter id="pb107" x="-10%" y="-10%" width="120%" height="120%"><feGaussianBlur stdDeviation="0.500"/></filter></defs><circle cx="26" cy="26" r="26" fill="#fff"/><g transform="translate(2 2)"><g clip-path="url(#pp107)"><rect width="48" height="48" fill="#e8e8e3"/><g filter="url(#pb107)"><rect x="17" y="-2" width="17" height="4.500" fill="#f3d98f"/><path d="M5 49 L9 42 L17.500 39 L21 49Z" fill="#bfe3ea"/><path d="M29 49 L32.500 37.500 L40.500 42 L45 49Z" fill="#cfeaf0"/><path d="M16.500 37 L33.500 35 L34.500 49 L18 49Z" fill="#85593f"/><ellipse cx="36.200" cy="26" rx="2.200" ry="4.200" fill="#b58466"/><path d="M10 22 Q9.500 14 17 12.500 Q28 10 35 17 Q37 24 35.500 31 Q33 40 25 43.200 Q19 44.200 15.500 40 Q11 33 10 22Z" fill="#be8e6e"/><ellipse cx="23.500" cy="28" rx="6" ry="7.500" fill="#cd9f80"/><path d="M11.800 31 Q17 37.500 24 37.500 Q31 37 35.300 29.500 Q33.500 40 25 43.200 Q19 44.200 15.500 40Z" fill="#8d6450"/><path d="M9.500 26 Q3 14 9 6.500 Q16 -1 27 1.500 Q35 3 36.800 12 Q38.200 18 36.200 22.500 Q34 15 30 13.500 Q22 12 16 15.200 Q11.500 17.500 11.800 25Z" fill="#14110f"/><path d="M12.300 22.800 Q16 20.600 19.800 22.400" stroke="#1e1510" stroke-width="1.900" fill="none"/><path d="M23.500 21.200 Q27.500 19.200 31.800 21.200" stroke="#1e1510" stroke-width="1.900" fill="none"/><ellipse cx="16.200" cy="25" rx="2" ry="0.900" fill="#2a1c14"/><ellipse cx="27.600" cy="23.800" rx="2.200" ry="0.900" fill="#2a1c14"/><path d="M20.600 24.500 L19.500 31.200 L23 31.800" stroke="#9a6d52" stroke-width="1" fill="none"/><path d="M18.300 35.700 Q22.500 37 27.200 35" stroke="#6d4234" stroke-width="1.300" fill="none"/></g></g></g></svg>
<div style="left:664px;top:1232px;width:157px;height:36px;background:#f1f2f4;border-radius:4.5px;"></div>
<span style="left:681.80px;top:1241.22px;font-size:21px;color:#172b4d;-webkit-text-stroke:0.57px #172b4d;letter-spacing:0.336px;">Invite myself</span>
<svg style="left:114px;top:1389px;clip-path:inset(0 0 9px 0);" width="21" height="21" viewBox="0 0 21 21"><rect width="21" height="21" rx="4.500" fill="#ebecf0"/><path d="M6 8.200 L10.500 12.700 L15 8.200" fill="none" stroke="#2c3b5a" stroke-width="3" stroke-linecap="round" stroke-linejoin="round"/></svg>
<span style="left:146.00px;top:1388.72px;font-size:21px;color:#172b4d;-webkit-text-stroke:0.57px #172b4d;letter-spacing:0.242px;clip-path:inset(0 0 9.800px 0);">Activity</span>
<div style="left:114px;top:1401px;width:1388px;height:3px;background:#ebecf0;"></div>
<svg style="left:114px;top:1458px;" width="48" height="48" viewBox="0 0 48 48"><clipPath id="ac113"><rect width="48" height="48"/></clipPath><rect width="48" height="48" fill="#c4c4c4"/><g clip-path="url(#ac113)" fill="#fff"><circle cx="24" cy="23.76" r="9.84"/><path d="M18.00 23.76 V36.30 L13.20 38.30 H34.80 L30.00 36.30 V23.76Z"/><ellipse cx="24" cy="54.00" rx="19.68" ry="19.20"/></g></svg>
<div style="left:174px;top:1458px;width:1328px;height:48px;background:#fafbfc;border-radius:5px;border:3px solid #dfe1e6;"></div>
<span style="left:182.80px;top:1471.72px;font-size:21px;color:#62708a;letter-spacing:0.059px;">Click to add comment</span>
<svg style="left:1484px;top:1488px;" width="14" height="14" viewBox="0 0 14 14"><path d="M2 12 L12 2 M7.500 12.500 L12.500 7.500" stroke="#333" stroke-width="1.300"/></svg>
<svg style="left:1548px;top:78px;" width="21" height="21" viewBox="0 0 21 21"><rect width="21" height="21" rx="4.500" fill="#ebecf0"/><path d="M6 8.200 L10.500 12.700 L15 8.200" fill="none" stroke="#2c3b5a" stroke-width="3" stroke-linecap="round" stroke-linejoin="round"/></svg>
<span style="left:1578.20px;top:79.22px;font-size:21px;color:#172b4d;-webkit-text-stroke:0.57px #172b4d;letter-spacing:-0.242px;">People</span>
<span style="left:1579.20px;top:124.92px;font-size:21px;color:#5e6c84;letter-spacing:-0.611px;">Assignee:</span>
<svg style="left:1796px;top:119.5px;" width="36" height="36" viewBox="0 0 36 36"><clipPath id="ac120"><circle cx="18" cy="18" r="18"/></clipPath><circle cx="18" cy="18" r="18" fill="#c4c4c4"/><g clip-path="url(#ac120)" fill="#fff"><circle cx="18" cy="17.82" r="7.38"/><path d="M13.50 17.82 V27.60 L9.90 29.60 H26.10 L22.50 27.60 V17.82Z"/><ellipse cx="18" cy="40.50" rx="14.76" ry="14.40"/></g></svg>
<span style="left:1837.50px;top:124.92px;font-size:21px;color:#172b4d;letter-spacing:-0.421px;">Pradeep Gupta</span>
<svg style="left:1986.5px;top:125.5px;" width="21" height="21" viewBox="0 0 21 21"><circle cx="10.500" cy="10.500" r="10.500" fill="#1c4bc8"/><circle cx="10.500" cy="5.800" r="1.700" fill="#fff"/><path d="M8.600 9.200 h3.200 v7 M8.400 16.200 h4.600" stroke="#fff" stroke-width="2.200" fill="none"/></svg>
<span style="left:1796.50px;top:164.22px;font-size:21px;color:#1c4bc8;letter-spacing:-0.164px;">Assign to me</span>
<span style="left:1578.20px;top:208.22px;font-size:21px;color:#5e6c84;letter-spacing:-0.213px;">Reporter:</span>
<svg style="left:1796px;top:202.5px;" width="36" height="36" viewBox="0 0 36 36"><clipPath id="ac125"><circle cx="18" cy="18" r="18"/></clipPath><circle cx="18" cy="18" r="18" fill="#c4c4c4"/><g clip-path="url(#ac125)" fill="#fff"><circle cx="18" cy="17.82" r="7.38"/><path d="M13.50 17.82 V27.60 L9.90 29.60 H26.10 L22.50 27.60 V17.82Z"/><ellipse cx="18" cy="40.50" rx="14.76" ry="14.40"/></g></svg>
<span style="left:1838.50px;top:208.22px;font-size:21px;color:#172b4d;letter-spacing:-0.204px;">admin</span>
<svg style="left:1906.0px;top:208.5px;" width="21" height="21" viewBox="0 0 21 21"><circle cx="10.500" cy="10.500" r="10.500" fill="#1c4bc8"/><circle cx="10.500" cy="5.800" r="1.700" fill="#fff"/><path d="M8.600 9.200 h3.200 v7 M8.400 16.200 h4.600" stroke="#fff" stroke-width="2.200" fill="none"/></svg>
<span style="left:1578.20px;top:251.22px;font-size:21px;color:#5e6c84;letter-spacing:-0.311px;">Groups:</span>
<svg style="left:1651px;top:247.5px;" width="28" height="28" viewBox="0 0 28 28"><circle cx="14" cy="14" r="13.600" fill="#e6e1f6"/><circle cx="14" cy="14" r="7.800" fill="#5e4db2"/></svg>
<span style="left:1795.50px;top:251.22px;font-size:21px;color:#172b4d;letter-spacing:0.125px;">None</span>
<span style="left:1578.20px;top:290.22px;font-size:21px;color:#5e6c84;letter-spacing:-0.197px;">Request participants:</span>
<svg style="left:1796px;top:285px;" width="36" height="36" viewBox="0 0 36 36"><clipPath id="ac132"><circle cx="18" cy="18" r="18"/></clipPath><circle cx="18" cy="18" r="18" fill="#c4c4c4"/><g clip-path="url(#ac132)" fill="#fff"><circle cx="18" cy="17.82" r="7.38"/><path d="M13.50 17.82 V27.60 L9.90 29.60 H26.10 L22.50 27.60 V17.82Z"/><ellipse cx="18" cy="40.50" rx="14.76" ry="14.40"/></g></svg>
<span style="left:1839.00px;top:293.92px;font-size:21px;color:#172b4d;letter-spacing:-0.294px;">Daniel</span>
<svg style="left:1796px;top:329px;" width="36" height="36" viewBox="0 0 36 36"><clipPath id="ac134"><circle cx="18" cy="18" r="18"/></clipPath><circle cx="18" cy="18" r="18" fill="#c4c4c4"/><g clip-path="url(#ac134)" fill="#fff"><circle cx="18" cy="17.82" r="7.38"/><path d="M13.50 17.82 V27.60 L9.90 29.60 H26.10 L22.50 27.60 V17.82Z"/><ellipse cx="18" cy="40.50" rx="14.76" ry="14.40"/></g></svg>
<span style="left:1839.00px;top:338.22px;font-size:21px;color:#172b4d;letter-spacing:-0.421px;">Pradeep Gupta</span>
<span style="left:1578.20px;top:378.22px;font-size:21px;color:#5e6c84;letter-spacing:-0.067px;">Organizations:</span>
<span style="left:1795.50px;top:378.22px;font-size:21px;color:#172b4d;letter-spacing:0.125px;">None</span>
<span style="left:1579.20px;top:415.72px;font-size:21px;color:#5e6c84;letter-spacing:-0.568px;">Votes:</span>
<div style="left:1796px;top:415px;width:36px;height:24px;background:#dfe1e6;border-radius:12px;"></div>
<span style="left:1809.20px;top:417.96px;font-size:18px;color:#172b4d;font-weight:700;">0</span>
<span style="left:1579.20px;top:452.72px;font-size:21px;color:#5e6c84;letter-spacing:-0.488px;">Watchers:</span>
<div style="left:1796px;top:452px;width:36px;height:24px;background:#1c4bc8;border-radius:12px;"></div>
<span style="left:1808.50px;top:454.96px;font-size:18px;color:#fff;font-weight:700;">1</span>
<span style="left:1838.50px;top:452.72px;font-size:21px;color:#1c4bc8;letter-spacing:-0.183px;">Stop watching this issue</span>
<svg style="left:1548px;top:530px;" width="21" height="21" viewBox="0 0 21 21"><rect width="21" height="21" rx="4.500" fill="#ebecf0"/><path d="M6 8.200 L10.500 12.700 L15 8.200" fill="none" stroke="#2c3b5a" stroke-width="3" stroke-linecap="round" stroke-linejoin="round"/></svg>
<span style="left:1579.20px;top:531.02px;font-size:21px;color:#172b4d;-webkit-text-stroke:0.57px #172b4d;letter-spacing:-0.020px;">Service project request</span>
<span style="left:1578.20px;top:572.82px;font-size:21px;color:#5e6c84;letter-spacing:-0.270px;">Request type:</span>
<span style="left:1795.50px;top:573.02px;font-size:21px;color:#c3473b;letter-spacing:0.216px;">No match</span>
<svg style="left:1936px;top:568px;" width="25" height="25" viewBox="0 0 25 25"><circle cx="12.500" cy="12" r="9.300" fill="none" stroke="#172b4d" stroke-width="2.300"/><path d="M9.800 9.800 a2.700 2.700 0 1 1 4.200 2.300 c-1.100 0.700 -1.500 1.200 -1.500 2.200" fill="none" stroke="#172b4d" stroke-width="1.900" stroke-linecap="round"/><circle cx="12.500" cy="16.900" r="1.250" fill="#172b4d"/></svg>
<span style="left:1578.20px;top:611.02px;font-size:21px;color:#5e6c84;letter-spacing:-0.418px;">Channel:</span>
<span style="left:1796.50px;top:611.02px;font-size:21px;color:#172b4d;letter-spacing:-0.700px;transform:scaleX(0.8952);transform-origin:-0.0px 50%;">Jira</span>
<svg style="left:1548px;top:687px;" width="21" height="21" viewBox="0 0 21 21"><rect width="21" height="21" rx="4.500" fill="#ebecf0"/><path d="M6 8.200 L10.500 12.700 L15 8.200" fill="none" stroke="#2c3b5a" stroke-width="3" stroke-linecap="round" stroke-linejoin="round"/></svg>
<span style="left:1578.20px;top:689.22px;font-size:21px;color:#172b4d;-webkit-text-stroke:0.57px #172b4d;letter-spacing:-0.465px;">Dates</span>
<span style="left:1578.20px;top:731.22px;font-size:21px;color:#5e6c84;letter-spacing:-0.316px;">Created:</span>
<span style="left:1796.50px;top:731.22px;font-size:21px;color:#172b4d;letter-spacing:-0.391px;">Yesterday 10:30 AM</span>
<span style="left:1578.20px;top:768.22px;font-size:21px;color:#5e6c84;letter-spacing:0.158px;">Updated:</span>
<span style="left:1796.50px;top:768.22px;font-size:21px;color:#172b4d;letter-spacing:-0.094px;">54 minutes ago</span>
<svg style="left:1548px;top:845px;" width="21" height="21" viewBox="0 0 21 21"><rect width="21" height="21" rx="4.500" fill="#ebecf0"/><path d="M6 8.200 L10.500 12.700 L15 8.200" fill="none" stroke="#2c3b5a" stroke-width="3" stroke-linecap="round" stroke-linejoin="round"/></svg>
<span style="left:1579.20px;top:846.42px;font-size:21px;color:#172b4d;-webkit-text-stroke:0.57px #172b4d;letter-spacing:0.042px;">Scheduled Meetings</span>
<svg style="left:1579.3px;top:881.8px;" width="22" height="22" viewBox="0 0 22 22"><rect x="1" y="1" width="20" height="20" rx="3.600" fill="none" stroke="#172b4d" stroke-width="1.600"/><path d="M1 6.600 H21" stroke="#172b4d" stroke-width="1.600"/><g fill="#172b4d"><circle cx="7" cy="11.600" r="1.300"/><circle cx="11" cy="11.600" r="1.300"/><circle cx="15" cy="11.600" r="1.300"/><circle cx="7" cy="15.800" r="1.300"/><circle cx="11" cy="15.800" r="1.300"/></g></svg>
<span style="left:1609.50px;top:884.92px;font-size:21px;color:#172b4d;-webkit-text-stroke:0.57px #172b4d;letter-spacing:0.160px;">1 scheduled meeting</span>
<svg style="left:2223.5px;top:886.5px;" width="19" height="19" viewBox="0 0 19 19"><path d="M9.5 1 v17 M1 9.5 h17" stroke="#172b4d" stroke-width="2"/></svg>
<div style="left:1578px;top:923px;width:673px;height:85.5px;background:#fff;border-radius:6px;border:1px solid #dcdfe6;"></div>
<svg style="left:1594px;top:940px;" width="48" height="48" viewBox="0 0 48 48"><clipPath id="ac164"><circle cx="24" cy="24" r="24"/></clipPath><circle cx="24" cy="24" r="24" fill="#c4c4c4"/><g clip-path="url(#ac164)" fill="#fff"><circle cx="24" cy="19.30" r="10.85"/><path d="M18.00 19.30 V30.80 L13.20 32.80 H34.80 L30.00 30.80 V19.30Z"/><ellipse cx="24" cy="48.41" rx="18.00" ry="19.10"/></g></svg>
<svg style="left:1665px;top:954.5px;" width="20" height="20" viewBox="0 0 20 20"><g fill="none" stroke="#c1c7d0" stroke-width="1.900" stroke-linecap="round"><path d="M8.600 11.400 a3.400 3.400 0 0 0 4.800 0 l3.200 -3.200 a3.400 3.400 0 0 0 -4.800 -4.800 l-1.400 1.400"/><path d="M11.400 8.600 a3.400 3.400 0 0 0 -4.800 0 l-3.200 3.200 a3.400 3.400 0 0 0 4.800 4.800 l1.400 -1.400"/></g></svg>
<span style="left:1704.50px;top:941.02px;font-size:21px;color:#172b4d;-webkit-text-stroke:0.57px #172b4d;letter-spacing:-0.170px;">CS-2 - Laptop crashes</span>
<span style="left:1705.50px;top:971.22px;font-size:21px;color:#172b4d;letter-spacing:-0.473px;">Jun 13, 2025, 10:00 AM (...</span>
<svg style="left:1964px;top:939px;" width="48" height="48" viewBox="0 0 48 48"><clipPath id="ac168"><circle cx="24" cy="24" r="24"/></clipPath><circle cx="24" cy="24" r="24" fill="#c4c4c4"/><g clip-path="url(#ac168)" fill="#fff"><circle cx="24" cy="19.30" r="10.85"/><path d="M18.00 19.30 V30.80 L13.20 32.80 H34.80 L30.00 30.80 V19.30Z"/><ellipse cx="24" cy="48.41" rx="18.00" ry="19.10"/></g></svg>
<svg style="left:2004px;top:937px;" width="52" height="52" viewBox="0 0 52 52"><defs><clipPath id="pp169"><circle cx="24" cy="24" r="24"/></clipPath><filter id="pb169" x="-10%" y="-10%" width="120%" height="120%"><feGaussianBlur stdDeviation="0.500"/></filter></defs><circle cx="26" cy="26" r="26" fill="#fff"/><g transform="translate(2 2)"><g clip-path="url(#pp169)"><rect width="48" height="48" fill="#e8e8e3"/><g filter="url(#pb169)"><rect x="17" y="-2" width="17" height="4.500" fill="#f3d98f"/><path d="M5 49 L9 42 L17.500 39 L21 49Z" fill="#bfe3ea"/><path d="M29 49 L32.500 37.500 L40.500 42 L45 49Z" fill="#cfeaf0"/><path d="M16.500 37 L33.500 35 L34.500 49 L18 49Z" fill="#85593f"/><ellipse cx="36.200" cy="26" rx="2.200" ry="4.200" fill="#b58466"/><path d="M10 22 Q9.500 14 17 12.500 Q28 10 35 17 Q37 24 35.500 31 Q33 40 25 43.200 Q19 44.200 15.500 40 Q11 33 10 22Z" fill="#be8e6e"/><ellipse cx="23.500" cy="28" rx="6" ry="7.500" fill="#cd9f80"/><path d="M11.800 31 Q17 37.500 24 37.500 Q31 37 35.300 29.500 Q33.500 40 25 43.200 Q19 44.200 15.500 40Z" fill="#8d6450"/><path d="M9.500 26 Q3 14 9 6.500 Q16 -1 27 1.500 Q35 3 36.800 12 Q38.200 18 36.200 22.500 Q34 15 30 13.500 Q22 12 16 15.200 Q11.500 17.500 11.800 25Z" fill="#14110f"/><path d="M12.300 22.800 Q16 20.600 19.800 22.400" stroke="#1e1510" stroke-width="1.900" fill="none"/><path d="M23.500 21.200 Q27.500 19.200 31.800 21.200" stroke="#1e1510" stroke-width="1.900" fill="none"/><ellipse cx="16.200" cy="25" rx="2" ry="0.900" fill="#2a1c14"/><ellipse cx="27.600" cy="23.800" rx="2.200" ry="0.900" fill="#2a1c14"/><path d="M20.600 24.500 L19.500 31.200 L23 31.800" stroke="#9a6d52" stroke-width="1" fill="none"/><path d="M18.300 35.700 Q22.500 37 27.200 35" stroke="#6d4234" stroke-width="1.300" fill="none"/></g></g></g></svg>
<div style="left:2069px;top:948px;width:157px;height:36px;background:#f1f2f4;border-radius:4.5px;"></div>
<span style="left:2087.00px;top:957.02px;font-size:21px;color:#172b4d;-webkit-text-stroke:0.57px #172b4d;letter-spacing:0.320px;">Invite myself</span>
<svg style="left:1580.5px;top:1023.5px;" width="19" height="19" viewBox="0 0 19.200 19.800"><g fill="#5e6c84"><circle cx="6.200" cy="4.400" r="3.400"/><path d="M0.600 14.400 v-3 a3.600 3.600 0 0 1 3.600 -3.600 h4 a3.600 3.600 0 0 1 3 1.600 a5.600 5.600 0 0 0 -3.400 5 v1.600 h-5.600 a1.600 1.600 0 0 1 -1.600 -1.600z"/><circle cx="13.400" cy="8.200" r="3.200"/><path d="M8.600 17.600 v-2.800 a3.200 3.200 0 0 1 3.200 -3.200 h3.600 a3.200 3.200 0 0 1 3.200 3.200 v2.800 a1.800 1.800 0 0 1 -1.800 1.800 h-6.400 a1.800 1.800 0 0 1 -1.800 -1.800z"/></g></svg>
<span style="left:1608.00px;top:1022.72px;font-size:21px;color:#5e6c84;letter-spacing:0.055px;">Involved people</span>
<svg style="left:1595.7px;top:1058px;" width="48" height="48" viewBox="0 0 48 48"><defs><clipPath id="pp174"><circle cx="24" cy="24" r="24"/></clipPath><filter id="pb174" x="-10%" y="-10%" width="120%" height="120%"><feGaussianBlur stdDeviation="0.500"/></filter></defs><g transform="translate(0 0)"><g clip-path="url(#pp174)"><rect width="48" height="48" fill="#e8e8e3"/><g filter="url(#pb174)"><rect x="17" y="-2" width="17" height="4.500" fill="#f3d98f"/><path d="M5 49 L9 42 L17.500 39 L21 49Z" fill="#bfe3ea"/><path d="M29 49 L32.500 37.500 L40.500 42 L45 49Z" fill="#cfeaf0"/><path d="M16.500 37 L33.500 35 L34.500 49 L18 49Z" fill="#85593f"/><ellipse cx="36.200" cy="26" rx="2.200" ry="4.200" fill="#b58466"/><path d="M10 22 Q9.500 14 17 12.500 Q28 10 35 17 Q37 24 35.500 31 Q33 40 25 43.200 Q19 44.200 15.500 40 Q11 33 10 22Z" fill="#be8e6e"/><ellipse cx="23.500" cy="28" rx="6" ry="7.500" fill="#cd9f80"/><path d="M11.800 31 Q17 37.500 24 37.500 Q31 37 35.300 29.500 Q33.500 40 25 43.200 Q19 44.200 15.500 40Z" fill="#8d6450"/><path d="M9.500 26 Q3 14 9 6.500 Q16 -1 27 1.500 Q35 3 36.800 12 Q38.200 18 36.200 22.500 Q34 15 30 13.500 Q22 12 16 15.200 Q11.500 17.500 11.800 25Z" fill="#14110f"/><path d="M12.300 22.800 Q16 20.600 19.800 22.400" stroke="#1e1510" stroke-width="1.900" fill="none"/><path d="M23.500 21.200 Q27.500 19.200 31.800 21.200" stroke="#1e1510" stroke-width="1.900" fill="none"/><ellipse cx="16.200" cy="25" rx="2" ry="0.900" fill="#2a1c14"/><ellipse cx="27.600" cy="23.800" rx="2.200" ry="0.900" fill="#2a1c14"/><path d="M20.600 24.500 L19.500 31.200 L23 31.800" stroke="#9a6d52" stroke-width="1" fill="none"/><path d="M18.300 35.700 Q22.500 37 27.200 35" stroke="#6d4234" stroke-width="1.300" fill="none"/></g></g></g></svg>
<svg style="left:1626.4px;top:1088.5px;" width="20" height="20" viewBox="0 0 20 20"><circle cx="10" cy="10" r="10" fill="#fff"/><circle cx="10" cy="10" r="7.600" fill="#c4372c"/><path d="M6.200 6.600 L13.800 13.400" stroke="#fff" stroke-width="3"/></svg>
<span style="left:1659.00px;top:1059.82px;font-size:21px;color:#172b4d;letter-spacing:-0.421px;">Pradeep Gupta</span>
<span style="left:1660.00px;top:1088.16px;font-size:18px;color:#6b778c;letter-spacing:-0.700px;transform:scaleX(0.9937);transform-origin:-0.0px 50%;">Assignee</span>
<div style="left:2281px;top:61px;width:23px;height:1475px;background:#fcfcfc;"></div>
<svg style="left:2284px;top:72px;" width="18" height="14" viewBox="0 0 18 14"><path d="M9 2.200 L15.400 11.200 H2.600 Z" fill="#8b8b8b" stroke="#8b8b8b" stroke-width="1.600" stroke-linejoin="round"/></svg>
<svg style="left:2284px;top:1513px;" width="18" height="14" viewBox="0 0 18 14"><path d="M9 11.800 L15.400 2.800 H2.600 Z" fill="#8b8b8b" stroke="#8b8b8b" stroke-width="1.600" stroke-linejoin="round"/></svg>
<div style="left:2286px;top:315.6px;width:13px;height:727.4px;background:#8b8b8b;border-radius:6.5px;"></div>
</div></body></html>
